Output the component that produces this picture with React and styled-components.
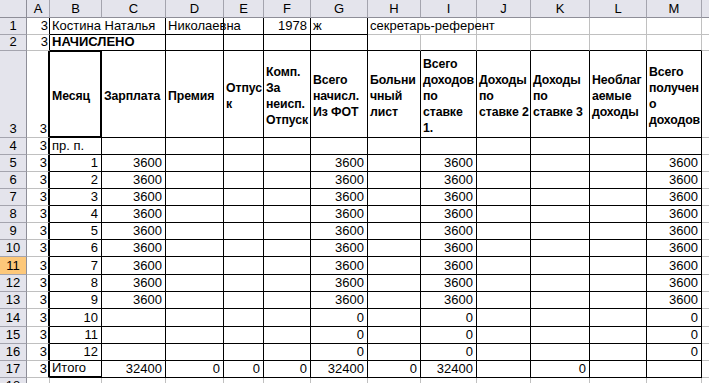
import React from 'react';
import styled, { createGlobalStyle } from 'styled-components';

const GlobalStyle = createGlobalStyle`
  html, body {
    margin: 0;
    padding: 0;
    background: #fff;
    overflow: hidden;
  }
  body {
    font-family: "Liberation Sans", Arial, sans-serif;
    color: #000;
  }
`;

const COLS = ['A', 'B', 'C', 'D', 'E', 'F', 'G', 'H', 'I', 'J', 'K', 'L', 'M', 'N'];
const WIDTHS = [23, 52, 64, 58, 40, 47, 57, 53, 56, 54, 59, 57, 55, 60];
const ROW_HEIGHTS = [17, 16, 87, 17, 17, 17, 17, 17, 17, 17, 18, 17, 17, 18, 17, 17, 17];

const GRID = '1px solid #c0c0c0';
const THIN = '1px solid #000';
const THICK = '2px solid #000';

const Viewport = styled.div`
  width: 100vw;
  height: 100vh;
  overflow: hidden;
`;

const Sheet = styled.div`
  display: grid;
  grid-template-columns: 27px ${WIDTHS.map(w => `${w}px`).join(' ')};
  grid-template-rows: 18px ${ROW_HEIGHTS.map(h => `${h}px`).join(' ')};
  font-size: 13px;
`;

const Corner = styled.div`
  box-sizing: border-box;
  background: #e4e4ec;
  border-right: 1px solid #8e8e98;
  border-bottom: 1px solid #8e8e98;
`;

const ColHead = styled.div`
  box-sizing: border-box;
  display: flex;
  align-items: center;
  justify-content: center;
  background: #e4e4ec;
  border-right: 1px solid #a4a4ae;
  border-bottom: 1px solid #8e8e98;
  line-height: 15px;
  overflow: hidden;
`;

const RowHead = styled.div`
  box-sizing: border-box;
  display: flex;
  align-items: flex-end;
  justify-content: center;
  padding-bottom: 1px;
  background: ${p => (p.$active ? '#fdc87a' : '#e4e4ec')};
  border-right: 1px solid #8e8e98;
  border-bottom: 1px solid #a4a4ae;
  line-height: 15px;
`;

const Cell = styled.div`
  box-sizing: border-box;
  grid-column: span ${p => p.$span || 1};
  display: flex;
  align-items: flex-end;
  justify-content: ${p => (p.$right ? 'flex-end' : 'flex-start')};
  padding: 0 ${p => (p.$right ? '3px' : '0')} 1px ${p => (p.$right ? '0' : '2px')};
  border-right: ${p => p.$rb};
  border-bottom: ${p => p.$bb};
  border-top: ${p => p.$bt || 'none'};
  font-weight: ${p => (p.$bold ? 700 : 400)};
  line-height: 15px;
  white-space: nowrap;
`;

const TitleCell = styled(Cell)`
  flex-direction: column;
  justify-content: center;
  align-items: flex-start;
  padding: 3px 0 0 2px;
  font-size: 12.3px;
  font-weight: 700;
  letter-spacing: -0.1px;
  line-height: 16px;
  overflow: hidden;
`;

const SideCell = styled(Cell)`
  padding-right: 1px;
`;

const HEADINGS = {
  B: ['Месяц'],
  C: ['Зарплата'],
  D: ['Премия'],
  E: ['Отпус', 'к'],
  F: ['Комп.', 'За', 'неисп.', 'Отпуск'],
  G: ['Всего', 'начисл.', 'Из ФОТ'],
  H: ['Больни', 'чный', 'лист'],
  I: ['Всего', 'доходов', 'по', 'ставке', '1.'],
  J: ['Доходы', 'по', 'ставке 2'],
  K: ['Доходы', 'по', 'ставке 3'],
  L: ['Необлаг', 'аемые', 'доходы'],
  M: ['Всего', 'получен', 'о', 'доходов'],
};

// each row: list of cells { col, text, right, bold, span }
const buildRows = () => {
  const rows = {};
  rows[1] = [
    { col: 'B', text: 'Костина Наталья', span: 2 },
    { col: 'D', text: 'Николаевна' },
    { col: 'F', text: '1978', right: true },
    { col: 'G', text: 'ж' },
    { col: 'H', text: 'секретарь-референт', span: 2 },
  ];
  rows[2] = [{ col: 'B', text: 'НАЧИСЛЕНО', bold: true, span: 2 }];
  rows[3] = [];
  rows[4] = [{ col: 'B', text: 'пр. п.' }];
  for (let n = 1; n <= 12; n += 1) {
    const v = n <= 9 ? '3600' : '0';
    rows[n + 4] = [
      { col: 'B', text: String(n), right: true },
      ...(n <= 9 ? [{ col: 'C', text: '3600', right: true }] : []),
      { col: 'G', text: v, right: true },
      { col: 'I', text: v, right: true },
      { col: 'M', text: v, right: true },
    ];
  }
  rows[17] = [
    { col: 'B', text: 'Итого' },
    { col: 'C', text: '32400', right: true },
    { col: 'D', text: '0', right: true },
    { col: 'E', text: '0', right: true },
    { col: 'F', text: '0', right: true },
    { col: 'G', text: '32400', right: true },
    { col: 'H', text: '0', right: true },
    { col: 'I', text: '32400', right: true },
    { col: 'K', text: '0', right: true },
  ];
  rows[18] = [];
  return rows;
};

const ROWS = buildRows();

const bordered = (r, ci) => {
  if (r === 1 || r === 2) return ci >= 1 && ci <= 6;
  if (r >= 3 && r <= 17) return ci >= 1 && ci <= 12;
  return false;
};

const rightBorder = (r, ci) => {
  if (ci === 0 && r >= 3 && r <= 17) return THICK;
  if (ci === 1 && r === 3) return THICK;
  return bordered(r, ci) || bordered(r, ci + 1) ? THIN : GRID;
};

const bottomBorder = (r, ci) => {
  if (ci === 1 && (r === 3 || r === 17)) return THICK;
  return bordered(r, ci) || bordered(r + 1, ci) ? THIN : GRID;
};

const renderRow = r => {
  const out = [<RowHead key={`h${r}`} $active={r === 11}>{r}</RowHead>];
  out.push(
    <SideCell key={`${r}A`} $right $rb={rightBorder(r, 0)} $bb={bottomBorder(r, 0)}>
      {r <= 17 ? '3' : ''}
    </SideCell>,
  );
  let ci = 1;
  while (ci < COLS.length) {
    const col = COLS[ci];
    if (r === 3 && HEADINGS[col]) {
      out.push(
        <TitleCell
          key={`${r}${col}`}
          $rb={rightBorder(r, ci)}
          $bb={bottomBorder(r, ci)}
          $bt={ci === 1 ? THIN : undefined}
        >
          {HEADINGS[col].map(line => (
            <span key={line}>{line}</span>
          ))}
        </TitleCell>,
      );
      ci += 1;
    } else {
      const item = ROWS[r].find(c => c.col === col);
      const span = item?.span || 1;
      const last = ci + span - 1;
      out.push(
        <Cell
          key={`${r}${col}`}
          $span={span}
          $right={item?.right}
          $bold={item?.bold}
          $rb={rightBorder(r, last)}
          $bb={bottomBorder(r, last)}
        >
          {item?.text}
        </Cell>,
      );
      ci += span;
    }
  }
  return out;
};

const App = () => (
  <Viewport>
    <GlobalStyle />
    <Sheet>
      <Corner />
      {COLS.map(c => (
        <ColHead key={c}>{c === 'N' ? '' : c}</ColHead>
      ))}
      {Array.from({ length: 18 }, (_, i) => renderRow(i + 1))}
    </Sheet>
  </Viewport>
);

export default App;
